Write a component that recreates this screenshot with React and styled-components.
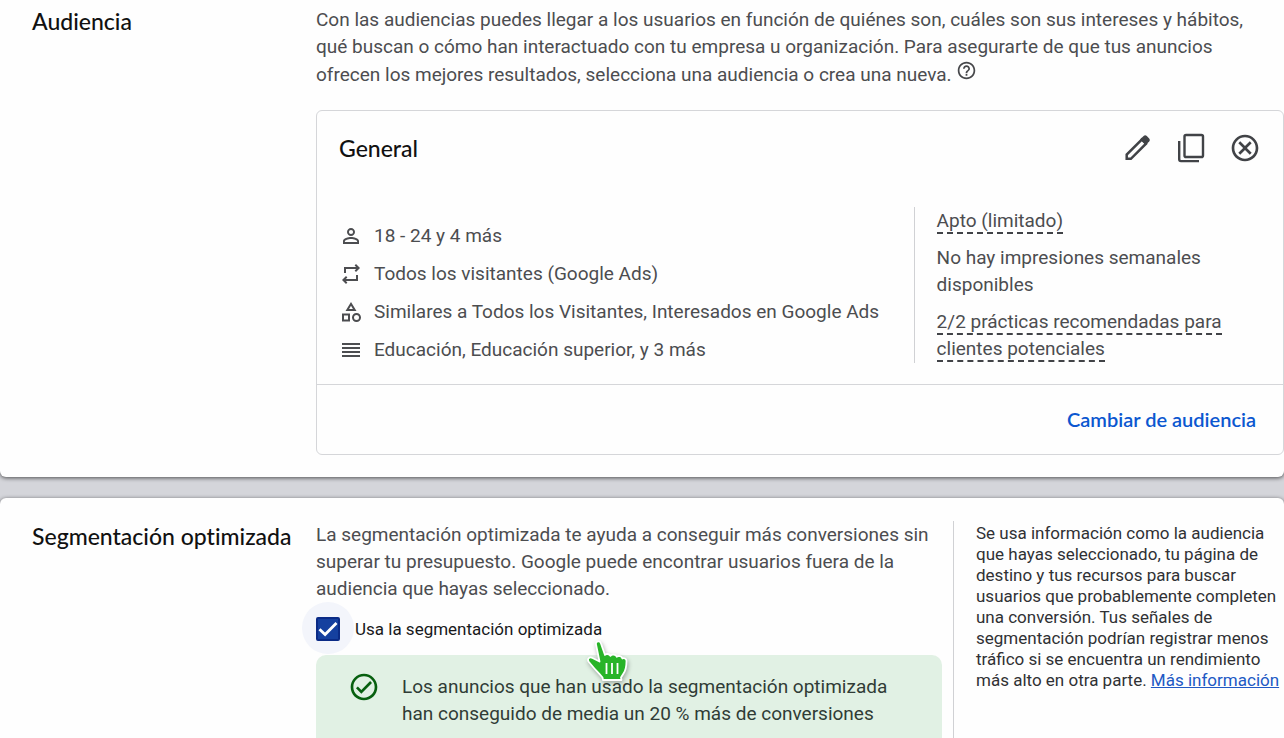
import React, { useState } from 'react';
import styled, { createGlobalStyle } from 'styled-components';
import {
  MdOutlineCategory,
  MdReorder,
  MdHelpOutline,
  MdPersonOutline,
  MdOutlineCheckCircle,
  MdOutlineCancel,
} from 'react-icons/md';

const GlobalStyle = createGlobalStyle`
  * {
    box-sizing: border-box;
  }

  body {
    margin: 0;
    background: #d4d5da;
    font-family: Roboto, 'Liberation Sans', sans-serif;
    color: #4c4d50;
  }
`;

const Page = styled.main`
  display: flex;
  flex-direction: column;
  gap: 21px;
  height: 100vh;
  overflow: hidden;
`;

const Section = styled.section`
  display: grid;
  grid-template-columns: 284px minmax(0, 1fr);
  flex-shrink: 0;
  padding: ${({ $first }) => ($first ? '6px 0 22px 32px' : '23px 0 32px 32px')};
  background: #fefefe;
  border-radius: ${({ $first }) => ($first ? '0 0 6px 6px' : '6px')};
  box-shadow: 0 1px 4px rgba(0, 0, 0, 0.65);
`;

const SectionTitle = styled.h2`
  margin: 0;
  padding-top: 1px;
  font-family: Lato, sans-serif;
  font-size: 23px;
  font-weight: 500;
  line-height: 28px;
  font-variant-ligatures: none;
  white-space: nowrap;
  color: #111;
`;

const Paragraph = styled.p`
  margin: 0;
  font-size: 19px;
  line-height: 27px;
`;

const Intro = styled(Paragraph)`
  padding-right: 24px;
`;

const HelpButton = styled.button`
  padding: 0;
  border: none;
  background: none;
  color: #47484b;
  font-size: 21px;
  line-height: 0;
`;

const AudienceCard = styled.article`
  margin-top: 22px;
  border: 1px solid #d5d6d9;
  border-radius: 6px;
`;

const CardHeader = styled.header`
  display: flex;
  align-items: center;
  justify-content: space-between;
  padding: 21px 22px 0;
`;

const CardTitle = styled.h3`
  margin: 0;
  font-family: Lato, sans-serif;
  font-size: 23px;
  font-weight: 500;
  line-height: 28px;
  color: #111;
`;

const CardActions = styled.div`
  display: flex;
  gap: 22px;
`;

const IconButton = styled.button`
  display: flex;
  padding: 0;
  border: none;
  background: none;
  color: #414347;
  font-size: 32px;
  cursor: pointer;
`;

const CardBody = styled.div`
  display: grid;
  grid-template-columns: minmax(0, 596fr) minmax(0, 369fr);
  padding: 43px 0 21px;
`;

const SegmentList = styled.ul`
  display: flex;
  flex-direction: column;
  gap: 11px;
  margin: 0;
  padding: 15px 0 0 22px;
  list-style: none;
`;

const SegmentItem = styled.li`
  display: flex;
  align-items: center;
  gap: 11px;
  font-size: 19px;
  line-height: 27px;

  svg {
    flex-shrink: 0;
    font-size: 24px;
    color: #4c4d50;
  }
`;

const StatusColumn = styled.div`
  display: flex;
  flex-direction: column;
  gap: 10px;
  border-left: 1px solid #d0d1d4;
  padding: 0 40px 0 22px;
`;

const Hint = styled.span`
  border-bottom: 2px dashed #414347;
`;

const CardFooter = styled.footer`
  display: flex;
  justify-content: flex-end;
  padding: 21px 27px;
  border-top: 1px solid #d5d6d9;
`;

const TextButton = styled.button`
  padding: 0;
  border: none;
  background: none;
  color: #0b57d0;
  font-family: Lato, sans-serif;
  font-size: 20px;
  font-weight: 600;
  line-height: 27px;
  cursor: pointer;
`;

const OptimizedContent = styled.div`
  display: grid;
  grid-template-columns: minmax(0, 637fr) minmax(0, 331fr);
`;

const OptimizedMain = styled.div`
  padding-right: 11px;
`;

const CheckRow = styled.label`
  position: relative;
  isolation: isolate;
  display: flex;
  align-items: center;
  gap: 15px;
  height: 53px;
  font-size: 17px;
  color: #18191b;
  cursor: pointer;
`;

const CheckControl = styled.span`
  display: grid;
  place-items: center;

  > * {
    grid-area: 1 / 1;
  }

  svg {
    z-index: 1;
    pointer-events: none;
  }
`;

const CheckInput = styled.input`
  appearance: none;
  width: 24px;
  height: 24px;
  margin: 0;
  border: 2px solid #0b2b86;
  border-radius: 2px;
  background: ${({ checked }) => (checked ? '#15409f' : '#fff')};
  cursor: pointer;

  &::before {
    content: '';
    position: absolute;
    left: -14px;
    top: 0;
    z-index: -1;
    width: 52px;
    height: 52px;
    border-radius: 50%;
    background: #f3f5fb;
  }
`;

const Pointer = styled.svg`
  position: absolute;
  left: 268px;
  top: 37px;
  z-index: 2;
  filter: drop-shadow(1px 2px 2px rgba(0, 0, 0, 0.3));
  pointer-events: none;
`;

const SuccessBanner = styled.div`
  display: flex;
  gap: 22px;
  padding: 16px 24px 24px 32px;
  border-radius: 10px;
  background: #e1f1e4;
  color: #303c36;

  svg {
    flex-shrink: 0;
    font-size: 32px;
    color: #07600f;
  }
`;

const BannerText = styled(Paragraph)`
  padding-top: 2px;
`;

const SideNote = styled.aside`
  border-left: 1px solid #d0d1d4;
  padding: 2px 0 0 22px;
  font-size: 17px;
  line-height: 21px;
  color: #303134;
`;

const InfoLink = styled.a`
  color: #2159c4;
`;

const CopyIcon = () => (
  <svg width="32" height="32" viewBox="0 0 32 32" fill="none" stroke="currentColor" strokeWidth="2.4">
    <rect x="9.5" y="3" width="18.5" height="22" rx="1.6" />
    <path d="M4.2 9v18.3a1.8 1.8 0 0 0 1.8 1.8h18" />
  </svg>
);

const PencilIcon = () => (
  <svg width="32" height="32" viewBox="0 0 32 32" fill="none" stroke="currentColor" strokeWidth="2.5">
    <path d="M5.7 26.800v-4.200L20.800 7.500l4.200 4.200L9.900 26.800z" />
    <path d="M19.200 7.200l3.400-3.200a2.400 2.400 0 0 1 3.200 0l2.400 2.400a2.400 2.400 0 0 1 0 3.200l-3.400 3.200z" fill="currentColor" stroke="none" />
  </svg>
);

const LoopIcon = () => (
  <svg width="24" height="24" viewBox="0 -960 960 960" fill="currentColor">
    <path d="M280-80 120-240l160-160 56 58-62 62h406v-160h80v240H274l62 62-56 58Zm-80-440v-240h486l-62-62 56-58 160 160-160 160-56-58 62-62H280v160h-80Z" />
  </svg>
);

const HandPointer = () => (
  <Pointer width="46" height="46" viewBox="0 0 46 46">
    <path
      d="M12 5.500C11.300 2 16 1.300 17 4.500L21 16c.5-1.400 4.500-1.500 5.500.8 1-1.800 5.500-1.500 6.300 1 1.200-1.500 5.200-.8 5.500 1.700 1.700-.7 4.200 0 4.200 2.500 0 6-.5 9-3 12.500l-2.500 4 .5 2.500H19l-.5-2.500c-3.500-4.500-6.500-7-9-10l-5-6c-1.500-3 1-5 4-3.500l7 3.500z"
      fill="#28b428"
      stroke="#fff"
      strokeWidth="1.800"
      strokeLinejoin="round"
    />
    <path d="M22.500 24v11M28 24v11M33.500 24v11" stroke="#fff" strokeWidth="1.800" />
  </Pointer>
);

const segments = [
  { icon: MdPersonOutline, text: '18 - 24 y 4 más' },
  { icon: LoopIcon, text: 'Todos los visitantes (Google Ads)' },
  { icon: MdOutlineCategory, text: 'Similares a Todos los Visitantes, Interesados en Google Ads' },
  { icon: MdReorder, text: 'Educación, Educación superior, y 3 más' },
];

const App = () => {
  const [optimized, setOptimized] = useState(true);

  return (
    <>
      <GlobalStyle />
      <Page>
        <Section $first>
          <SectionTitle>Audiencia</SectionTitle>
          <div>
            <Intro>
              Con las audiencias puedes llegar a los usuarios en función de quiénes son, cuáles son sus intereses y hábitos,
              qué buscan o cómo han interactuado con tu empresa u organización. Para asegurarte de que tus anuncios
              ofrecen los mejores resultados, selecciona una audiencia o crea una nueva.{' '}
              <HelpButton type="button" aria-label="Ayuda">
                <MdHelpOutline />
              </HelpButton>
            </Intro>

            <AudienceCard>
              <CardHeader>
                <CardTitle>General</CardTitle>
                <CardActions>
                  <IconButton type="button" aria-label="Editar">
                    <PencilIcon />
                  </IconButton>
                  <IconButton type="button" aria-label="Copiar">
                    <CopyIcon />
                  </IconButton>
                  <IconButton type="button" aria-label="Quitar">
                    <MdOutlineCancel />
                  </IconButton>
                </CardActions>
              </CardHeader>

              <CardBody>
                <SegmentList>
                  {segments.map(({ icon: Icon, text }) => (
                    <SegmentItem key={text}>
                      <Icon />
                      {text}
                    </SegmentItem>
                  ))}
                </SegmentList>
                <StatusColumn>
                  <Paragraph>
                    <Hint>Apto (limitado)</Hint>
                  </Paragraph>
                  <Paragraph>No hay impresiones semanales disponibles</Paragraph>
                  <Paragraph>
                    <Hint>2/2 prácticas recomendadas para clientes potenciales</Hint>
                  </Paragraph>
                </StatusColumn>
              </CardBody>

              <CardFooter>
                <TextButton type="button">Cambiar de audiencia</TextButton>
              </CardFooter>
            </AudienceCard>
          </div>
        </Section>

        <Section>
          <SectionTitle>Segmentación optimizada</SectionTitle>
          <OptimizedContent>
            <OptimizedMain>
              <Paragraph>
                La segmentación optimizada te ayuda a conseguir más conversiones sin superar tu presupuesto. Google
                puede encontrar usuarios fuera de la audiencia que hayas seleccionado.
              </Paragraph>
              <CheckRow htmlFor="optimized">
                <CheckControl>
                  <CheckInput
                    type="checkbox"
                    id="optimized"
                    checked={optimized}
                    onChange={(e) => setOptimized(e.target.checked)}
                  />
                  {optimized && (
                    <svg width="24" height="24" viewBox="0 0 24 24" fill="none" stroke="#fff" strokeWidth="2.8">
                      <path d="M3.5 12.3l5.600 5.300L20.500 6" />
                    </svg>
                  )}
                </CheckControl>
                Usa la segmentación optimizada
                <HandPointer />
              </CheckRow>
              <SuccessBanner>
                <MdOutlineCheckCircle />
                <BannerText>
                  Los anuncios que han usado la segmentación optimizada han conseguido de media un 20 % más de
                  conversiones
                </BannerText>
              </SuccessBanner>
            </OptimizedMain>
            <SideNote>
              Se usa información como la audiencia que hayas seleccionado, tu página de destino y tus recursos para
              buscar usuarios que probablemente completen una conversión. Tus señales de segmentación podrían registrar
              menos tráfico si se encuentra un rendimiento más alto en otra parte. <InfoLink href="#">Más información</InfoLink>
            </SideNote>
          </OptimizedContent>
        </Section>
      </Page>
    </>
  );
};

export default App;
